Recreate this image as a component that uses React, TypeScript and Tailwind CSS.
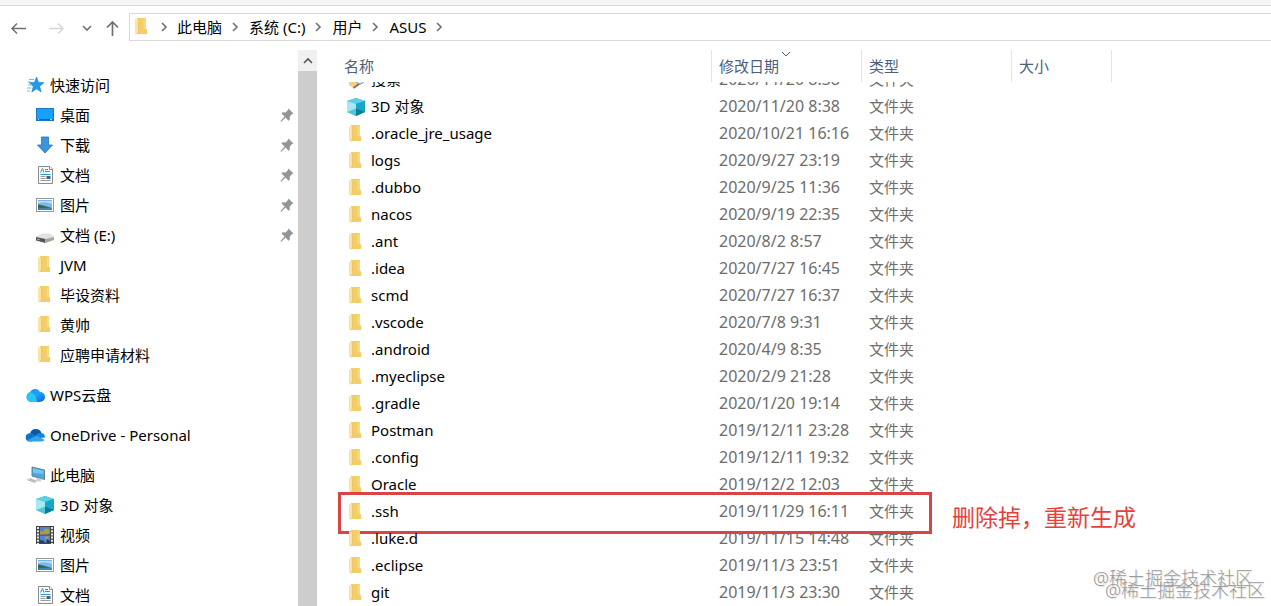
import { useState } from "react";
import type { ReactNode } from "react";

type IconName =
  | "star"
  | "desktop"
  | "download"
  | "document"
  | "picture"
  | "drive"
  | "folder"
  | "search"
  | "wps"
  | "onedrive"
  | "computer"
  | "cube"
  | "video";

interface NavItem {
  id: string;
  icon: IconName;
  label: string;
  pinned?: boolean;
}

interface FileRow {
  icon?: IconName;
  name: string;
  date: string;
  marked?: boolean;
}

const drawings: Record<IconName, ReactNode> = {
  star: (
    <>
      <path d="M10.5 1l2 5.4 5.5.2-4.3 3.6 1.5 5.8-4.7-3.2L5.8 16l1.5-5.7L3 6.6l5.5-.2z" fill="#1e9be8" stroke="#1680c8" strokeWidth=".6" />
      <path d="M3 3.5h5M1.5 6h3M2 9h4M1 12h4.5M1 15h3" stroke="#6cc0f2" strokeWidth="1" />
    </>
  ),
  desktop: (
    <>
      <rect x=".5" y="2.5" width="17" height="12" fill="#18a0fb" stroke="#1679c4" />
      <path d="M1 13.5h16" stroke="#0c62a8" />
      <path d="M2 13.5h1M14 13.5h2" stroke="#bfe4ff" />
    </>
  ),
  download: (
    <path d="M5.5 1h7v8h4L9 17 1.500 9h4z" fill="#3d94dc" stroke="#2374bd" strokeWidth=".8" />
  ),
  document: (
    <>
      <path d="M2.500.5h11.500l2.500 2.500v14.500h-14z" fill="#fafafa" stroke="#8b8b8b" />
      <path d="M13.500.5v3h3" fill="#fff" stroke="#8b8b8b" />
      <path d="M4.500 6.500 6.500 2.500l1.500 4M9 3.500h3M9 5.500h5M4.500 8.500h10" fill="none" stroke="#2597d4" />
      <path d="M4.500 10.500h5M4.500 12.500h5M4.500 14.500h10" stroke="#9b9b9b" />
      <rect x="10.500" y="10" width="4" height="3" fill="#356a86" />
    </>
  ),
  picture: (
    <>
      <rect x=".5" y="2.500" width="17" height="13" fill="#fff" stroke="#9a9a9a" />
      <rect x="2" y="4" width="14" height="10" fill="#76b9ea" />
      <path d="M2 7.500c4-1.500 8-1.500 14 .5V5H2z" fill="#b9dcf5" />
      <path d="M2 8.500c4 .2 8 2 13 3.200L16 14H2z" fill="#34685a" />
      <path d="M2 12.500c5-1.400 9-.8 14-.3V14H2z" fill="#3d86b4" />
    </>
  ),
  drive: (
    <>
      <path d="M5.500 7.500h9L18 11l-8.500 2.500L0 11z" fill="#e2e2e2" />
      <path d="M0 11l9.500 2v4L0 14.500z" fill="#555" />
      <path d="M9.500 13 18 11v3l-8.500 3z" fill="#a5a5a5" />
      <path d="M1.500 13.200l2 .5" stroke="#c7d8c7" />
    </>
  ),
  folder: (
    <>
      <path d="M4 0h9v10.500l1.200 1.500v4H4z" fill="#f2cd68" />
      <path d="M10.500 1H13v10h-2.500z" fill="#f6d981" />
      <path d="M2 1l3.500 1v11.500L4 17l-2-1.500z" fill="#fae3a3" />
      <path d="M5.500 2v11.500L4.500 16" fill="none" stroke="#e5ba55" strokeWidth=".6" />
    </>
  ),
  search: (
    <>
      <path d="M2 3h8l5 8-6 4-3 2-4-3z" fill="#f4d27a" />
      <path d="M6.500 17l7-5" stroke="#777" strokeWidth="2" />
      <circle cx="13" cy="9" r="4" fill="#d9edf8" stroke="#8a9ba5" />
    </>
  ),
  wps: (
    <>
      <defs>
        <linearGradient id="wps" x1="0" y1="0" x2="1" y2="1">
          <stop offset="0" stopColor="#2f8df5" />
          <stop offset=".5" stopColor="#1aa2f7" />
          <stop offset="1" stopColor="#0d62e0" />
        </linearGradient>
      </defs>
      <path d="M5 16a5 5 0 0 1-1-9.700A5.500 5.500 0 0 1 14 6a5 5 0 0 1 0 10z" fill="url(#wps)" />
      <path d="M5 16a5 5 0 0 1-1-9.700c4 .2 6 4 7 9.700z" fill="#28c6f3" />
    </>
  ),
  onedrive: (
    <>
      <path d="M4 7.500a6 6 0 0 1 11.500-.5l-4 5z" fill="#0c59a4" />
      <path d="M3 15.500a4.200 4.200 0 0 1 1-8.300c2-.3 4 .8 6 2.300l-4 6z" fill="#1173c7" />
      <path d="M10 9.500c1.500-2 3-3 5.500-2.500 2.500.5 3.500 2 3.500 4.500l-8 1z" fill="#1586d8" />
      <path d="M1 14.500l9.500-5 8 4.300c-.5 1.200-1.500 1.700-3 1.700H3.500c-1 0-2-.3-2.500-1z" fill="#30a6e8" />
    </>
  ),
  computer: (
    <>
      <path d="M6 1l12.500 3v9.500L6 10z" fill="#45a9e8" stroke="#68747c" strokeWidth=".9" />
      <path d="M7 2.300l10.500 2.500v3L7 7z" fill="#76c6f3" />
      <path d="M11.500 12l-2 2.500 5 1.200 1-3" fill="#c8ccd0" />
      <path d="M0 13.500l4-1.500 8 3-3.500 2z" fill="#d1d4d6" />
      <path d="M2 14l7 2.200M4 13l6 2.200" stroke="#9aa0a4" strokeWidth=".6" />
    </>
  ),
  cube: (
    <>
      <path d="M9 0l9 3v11l-9 4-9-4V3z" fill="#25b3cf" />
      <path d="M9 0l9 3-9 3-9-3z" fill="#5fd0e2" />
      <path d="M0 3l9 3v12l-9-4z" fill="#a7e9f1" />
      <path d="M0 14l9-3.500V18z" fill="#53c5d7" />
      <path d="M9 6l9-3v11l-9-3.500z" fill="#16a7c8" />
      <path d="M9 10.500l9 3.500-9 4z" fill="#087e99" />
    </>
  ),
  video: (
    <>
      <rect width="18" height="18" fill="#444" />
      <path d="M2 1v17M16 1v17" stroke="#e9e9e9" strokeWidth="2" strokeDasharray="2 1.200" />
      <rect x="4" y="1" width="10" height="7.500" fill="#4f86c7" />
      <rect x="4" y="9.500" width="10" height="7.500" fill="#4d87cf" />
      <circle cx="10.500" cy="5.500" r="3" fill="#a1a14b" />
      <path d="M4 5l4 1v2.500H4zM8 11l5-1-2 4z" fill="#c98c43" />
      <path d="M4 14l4 1 1 2H4zM11 13l3 2v2h-4z" fill="#25405f" />
    </>
  ),
};

const quickAccess: NavItem[] = [
  { id: "desktop", icon: "desktop", label: "桌面", pinned: true },
  { id: "downloads", icon: "download", label: "下载", pinned: true },
  { id: "documents", icon: "document", label: "文档", pinned: true },
  { id: "pictures", icon: "picture", label: "图片", pinned: true },
  { id: "drive-e", icon: "drive", label: "文档 (E:)", pinned: true },
  { id: "jvm", icon: "folder", label: "JVM" },
  { id: "thesis", icon: "folder", label: "毕设资料" },
  { id: "huangshuai", icon: "folder", label: "黄帅" },
  { id: "jobs", icon: "folder", label: "应聘申请材料" },
];

const thisPc: NavItem[] = [
  { id: "pc-3d", icon: "cube", label: "3D 对象" },
  { id: "pc-video", icon: "video", label: "视频" },
  { id: "pc-pictures", icon: "picture", label: "图片" },
  { id: "pc-documents", icon: "document", label: "文档" },
];

const files: FileRow[] = [
  { icon: "search", name: "搜索", date: "2020/11/20 8:38" },
  { icon: "cube", name: "3D 对象", date: "2020/11/20 8:38" },
  { name: ".oracle_jre_usage", date: "2020/10/21 16:16" },
  { name: "logs", date: "2020/9/27 23:19" },
  { name: ".dubbo", date: "2020/9/25 11:36" },
  { name: "nacos", date: "2020/9/19 22:35" },
  { name: ".ant", date: "2020/8/2 8:57" },
  { name: ".idea", date: "2020/7/27 16:45" },
  { name: "scmd", date: "2020/7/27 16:37" },
  { name: ".vscode", date: "2020/7/8 9:31" },
  { name: ".android", date: "2020/4/9 8:35" },
  { name: ".myeclipse", date: "2020/2/9 21:28" },
  { name: ".gradle", date: "2020/1/20 19:14" },
  { name: "Postman", date: "2019/12/11 23:28" },
  { name: ".config", date: "2019/12/11 19:32" },
  { name: "Oracle", date: "2019/12/2 12:03" },
  { name: ".ssh", date: "2019/11/29 16:11", marked: true },
  { name: ".luke.d", date: "2019/11/15 14:48" },
  { name: ".eclipse", date: "2019/11/3 23:51" },
  { name: "git", date: "2019/11/3 23:30" },
];

const crumbs = ["此电脑", "系统 (C:)", "用户", "ASUS"];

function Icon({ name }: { name: IconName }) {
  return (
    <svg aria-hidden="true" className="h-[18px] w-[18px] shrink-0 overflow-visible" viewBox="0 0 18 18">
      {drawings[name]}
    </svg>
  );
}

function Chevron({ className, d, thin }: { className: string; d: string; thin?: boolean }) {
  return (
    <svg aria-hidden="true" className={className} fill="none" stroke="currentColor" viewBox="0 0 10 10">
      <path d={d} strokeWidth={thin ? 1 : 1.6} />
    </svg>
  );
}

function Pin() {
  return (
    <svg aria-hidden="true" className="h-[14px] w-[14px]" viewBox="0 0 14 14">
      <path d="M8.500.5l5 5-1.500.6-2.300 2.600.1 3-1.300 1L5.600 9.500 1.500 13.500l-1 .2.2-1L4.600 8.500 1.500 5.500l1-1.200 3 .1L8 2z" fill="#8f969c" />
    </svg>
  );
}

function NavLink({ item, nested }: { item: NavItem; nested?: boolean }) {
  return (
    <a
      className={
        nested
          ? "flex h-[30px] shrink-0 items-center gap-1.5 pl-9 pr-1 hover:bg-[#e5f3ff]"
          : "flex h-[30px] shrink-0 items-center gap-1.5 pl-[26px] pr-1 hover:bg-[#e5f3ff]"
      }
      href={`#${item.id}`}
    >
      <Icon name={item.icon} />
      <span className="flex-1">{item.label}</span>
      {item.pinned && <Pin />}
    </a>
  );
}

export default function App() {
  const [newestFirst, setNewestFirst] = useState(true);
  const rows = newestFirst ? files : [...files].reverse();

  return (
    <div className="relative flex h-screen flex-col overflow-hidden bg-white font-['Noto_Sans','Noto_Sans_CJK_SC',sans-serif] text-[15px] leading-[27px] text-black">
      <div className="h-1.5 shrink-0 border-b border-[#d9d9d9] bg-[#f5f5f5]" />

      {/* Address bar */}
      <header className="flex h-11 shrink-0 items-center">
        <div className="flex w-[129px] shrink-0 items-center pl-[10px] text-[#707070]">
          <button aria-label="后退" className="mr-[21px]">
            <svg className="h-[17px] w-[17px]" fill="none" stroke="currentColor" strokeWidth="1.5" viewBox="0 0 17 17">
              <path d="M16 8.500H2M7 3.500l-5 5 5 5" />
            </svg>
          </button>
          <button aria-label="前进" className="mr-[17px] text-[#d6d6d6]">
            <svg className="h-[17px] w-[17px]" fill="none" stroke="currentColor" strokeWidth="1.5" viewBox="0 0 17 17">
              <path d="M1 8.500h14M10 3.500l5 5-5 5" />
            </svg>
          </button>
          <button aria-label="最近浏览的位置" className="mr-3">
            <Chevron className="h-2.5 w-2.5" d="M1 3l4 4 4-4" />
          </button>
          <button aria-label="上移">
            <svg className="h-[17px] w-[17px]" fill="none" stroke="currentColor" strokeWidth="1.7" viewBox="0 0 17 17">
              <path d="M8.500 16V2M3 7.500L8.500 2 14 7.500" />
            </svg>
          </button>
        </div>
        <nav aria-label="地址" className="-mt-0.5 flex h-7 flex-1 items-center border border-r-0 border-[#d9d9d9] pl-[3px]">
          <Icon name="folder" />
          <Chevron className="mx-2 h-2.5 w-2.5 text-[#707070]" d="M3 1l4 4-4 4" />
          {crumbs.map((crumb) => (
            <div className="flex items-center" key={crumb}>
              <button>{crumb}</button>
              <Chevron className="ml-2 mr-[9px] h-2.5 w-2.5 text-[#707070]" d="M3 1l4 4-4 4" />
            </div>
          ))}
        </nav>
      </header>

      <div className="flex min-h-0 flex-1">
        {/* Navigation pane */}
        <aside className="flex w-[317px] shrink-0">
          <nav className="flex flex-1 flex-col gap-2.5 overflow-hidden pt-5">
            <div className="shrink-0">
              <NavLink item={{ id: "quick", icon: "star", label: "快速访问" }} />
              {quickAccess.map((item) => (
                <NavLink item={item} key={item.id} nested />
              ))}
            </div>
            <NavLink item={{ id: "wps", icon: "wps", label: "WPS云盘" }} />
            <NavLink item={{ id: "onedrive", icon: "onedrive", label: "OneDrive - Personal" }} />
            <div className="shrink-0">
              <NavLink item={{ id: "pc", icon: "computer", label: "此电脑" }} />
              {thisPc.map((item) => (
                <NavLink item={item} key={item.id} nested />
              ))}
            </div>
          </nav>
          <div className="flex w-[19px] flex-col bg-[#cdcdcd]">
            <button aria-label="向上滚动" className="flex h-[21px] items-center justify-center bg-[#f0f0f0] text-[#555]">
              <Chevron className="h-2.5 w-2.5" d="M1 7l4-4 4 4" />
            </button>
          </div>
        </aside>

        {/* File list */}
        <main className="min-w-0 flex-1 overflow-hidden pl-[19px]">
          <table className="w-[776px] table-fixed border-separate border-spacing-0 text-left">
            <colgroup>
              <col className="w-[375px]" />
              <col className="w-[150px]" />
              <col className="w-[150px]" />
              <col className="w-[101px]" />
            </colgroup>
            <thead className="text-[#4c607a]">
              <tr className="h-8">
                <th className="p-0 pl-2 font-normal">名称</th>
                <th className="border-l border-[#e5e5e5] p-0 pl-[7px] font-normal">
                  <button className="relative block" onClick={() => setNewestFirst(!newestFirst)}>
                    修改日期
                    <Chevron className="absolute -top-1 left-[62px] h-2.5 w-2.5" d="M1 3l4 4 4-4" thin />
                  </button>
                </th>
                <th className="border-l border-[#e5e5e5] p-0 pl-[7px] font-normal">类型</th>
                <th className="border-x border-[#e5e5e5] p-0 pl-[7px] font-normal">大小</th>
              </tr>
            </thead>
            <tbody className="text-[#6d6d6d] [&>tr:first-child>td>div]:h-[11px] [&>tr:first-child>td>div]:overflow-hidden">
              {rows.map((file) => (
                <tr key={file.name}>
                  <td className="p-0">
                    <div className="relative flex h-[27px] items-end pl-[11px] text-black">
                      <div className="flex h-[27px] shrink-0 items-center gap-1.5">
                        <Icon name={file.icon ?? "folder"} />
                        {file.name}
                      </div>
                      {file.marked && (
                        <div className="absolute -top-1.5 left-0.5 flex h-[42px] items-center whitespace-nowrap text-[23px] text-[#e8403a]">
                          <div className="h-full w-[594px] border-3 border-[#d94545]" />
                          <span className="mt-2 pl-5">删除掉，重新生成</span>
                        </div>
                      )}
                    </div>
                  </td>
                  <td className="p-0">
                    <div className="flex h-[27px] items-end pl-2 text-base leading-[27px]">
                      <span className="whitespace-nowrap">{file.date}</span>
                    </div>
                  </td>
                  <td className="p-0">
                    <div className="flex h-[27px] items-end pl-2">文件夹</div>
                  </td>
                  <td className="p-0" />
                </tr>
              ))}
            </tbody>
          </table>
        </main>
      </div>

      <div className="pointer-events-none absolute bottom-2.5 right-1.5 text-lg leading-3 font-light text-[#9a9a9a] [text-shadow:1px_1px_1px_#ddd]">
        <p className="pr-3">@稀土掘金技术社区</p>
        <p className="pl-3">@稀土掘金技术社区</p>
      </div>
    </div>
  );
}
